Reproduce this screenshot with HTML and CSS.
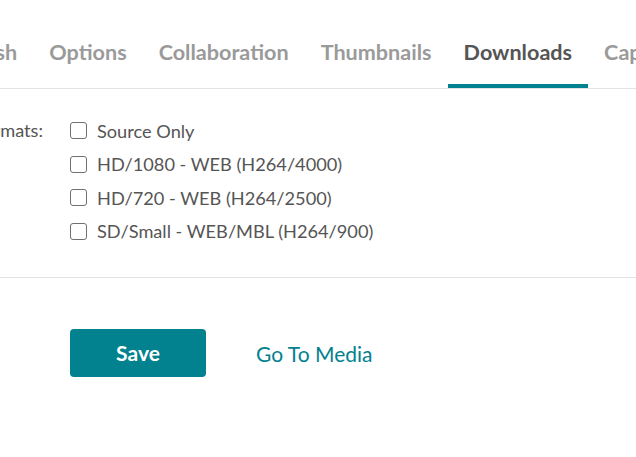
FILE: index.html
```html
<!DOCTYPE html>
<html lang="en">
<head>
<meta charset="utf-8">
<title>Downloads</title>
<link rel="stylesheet" href="styles.css">
</head>
<body>
<div class="page">
  <nav class="tabs">
    <a class="tab tab-first">Publish</a>
    <a class="tab">Options</a>
    <a class="tab">Collaboration</a>
    <a class="tab">Thumbnails</a>
    <a class="tab active">Downloads</a>
    <a class="tab">Captions</a>
  </nav>
  <section class="form">
    <div class="field">
      <div class="label">Formats:</div>
      <div class="options">
        <label class="option"><input type="checkbox" class="check"><span>Source Only</span></label>
        <label class="option"><input type="checkbox" class="check"><span>HD/1080 - WEB (H264/4000)</span></label>
        <label class="option"><input type="checkbox" class="check"><span>HD/720 - WEB (H264/2500)</span></label>
        <label class="option"><input type="checkbox" class="check"><span>SD/Small - WEB/MBL (H264/900)</span></label>
      </div>
    </div>
  </section>
  <div class="actions">
    <button class="btn-save">Save</button>
    <a class="link">Go To Media</a>
  </div>
</div>
</body>
</html>
```
FILE: styles.css
```css
* { box-sizing: border-box; }
html, body {
  margin: 0;
  padding: 0;
  background: #ffffff;
  overflow: hidden;
}
body {
  font-family: Lato, "Open Sans", sans-serif;
  width: 636px;
  height: 457px;
}
.page {
  width: 636px;
  overflow: hidden;
}
.tabs {
  display: flex;
  align-items: flex-end;
  height: 89px;
  border-bottom: 1px solid #e3e3e3;
  white-space: nowrap;
  margin-left: -69px;
  width: 1000px;
}
.tab {
  font-size: 21.6px;
  font-weight: 700;
  color: #9a9a9a;
  line-height: 25px;
  padding: 0 16px 19px;
  border-bottom: 4px solid transparent;
}
.tab.active {
  color: #555555;
  border-bottom-color: #02818f;
}
.form {
  padding: 25px 0 29px;
  border-bottom: 1px solid #e3e3e3;
}
.field {
  display: flex;
  margin-left: -80px;
}
.label {
  width: 150px;
  flex: none;
  padding-right: 27px;
  text-align: right;
  font-size: 18.2px;
  color: #555555;
  line-height: 33.5px;
}
.options {
  display: flex;
  flex-direction: column;
}
.option {
  display: flex;
  align-items: center;
  height: 33.5px;
  font-size: 18.2px;
  color: #555555;
}
.check {
  appearance: none;
  -webkit-appearance: none;
  width: 17px;
  height: 17px;
  margin: 0 10px 0 0;
  border: 1.5px solid #707070;
  border-radius: 3px;
  background: #fff;
}
.actions {
  display: flex;
  align-items: center;
  gap: 50px;
  padding: 51px 0 0 70px;
}
.btn-save {
  width: 136px;
  height: 48px;
  border: none;
  border-radius: 4px;
  background: #02818f;
  color: #ffffff;
  font-family: Lato, "Open Sans", sans-serif;
  font-size: 21px;
  font-weight: 700;
  padding-bottom: 2px;
}
.link {
  font-size: 21px;
  color: #02818f;
}
```
